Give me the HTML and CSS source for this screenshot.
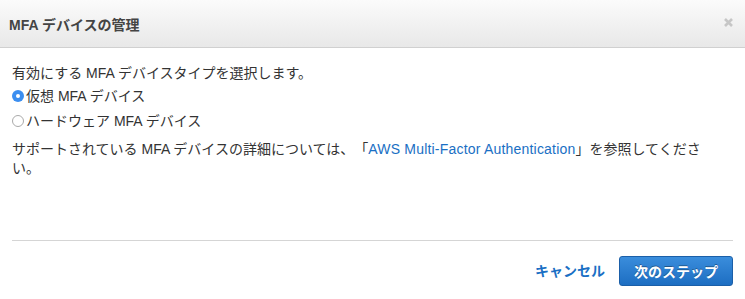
FILE: index.html
```html
<!DOCTYPE html>
<html lang="ja">
<head>
<meta charset="utf-8">
<link rel="stylesheet" href="styles.css">
</head>
<body>
<div class="modal">
  <div class="modal-header">
    <h1 class="title">MFA デバイスの管理</h1>
    <svg class="close" width="9" height="9" viewBox="0 0 9 9"><path d="M1 1L8 8M8 1L1 8" stroke="#c6c6c6" stroke-width="2.6" stroke-linecap="butt"/></svg>
  </div>
  <div class="modal-body">
    <p class="intro">有効にする MFA デバイスタイプを選択します。</p>
    <label class="radio-row"><span class="radio checked"></span>仮想 MFA デバイス</label>
    <label class="radio-row"><span class="radio"></span>ハードウェア MFA デバイス</label>
    <p class="info">サポートされている MFA デバイスの詳細については、「<a class="link" href="#">AWS Multi-Factor Authentication</a>」を参照してください。</p>
  </div>
  <div class="modal-footer">
    <a class="cancel" href="#">キャンセル</a>
    <button class="primary">次のステップ</button>
  </div>
</div>
</body>
</html>
```
FILE: styles.css
```css
html, body {
  margin: 0;
  padding: 0;
  background: #fff;
}
body {
  font-family: "Liberation Sans", "Noto Sans CJK JP", sans-serif;
  color: #333;
  font-size: 14px;
  text-spacing-trim: space-all;
}
.modal {
  width: 745px;
  height: 299px;
  display: flex;
  flex-direction: column;
}
.modal-header {
  height: 48px;
  box-sizing: border-box;
  border-bottom: 1px solid #d0d0d0;
  background: linear-gradient(#fbfbfb, #e8e8e8);
  display: flex;
  align-items: center;
  justify-content: space-between;
  padding: 0 12px 0 9px;
}
.title {
  margin: 0;
  font-size: 14px;
  font-weight: bold;
  color: #444;
}
.close {
  display: block;
  margin-top: -2px;
}
.modal-body {
  padding: 15px 12px 0 12px;
  flex: 1;
}
.intro {
  margin: 0;
  line-height: 20px;
}
.radio-row {
  display: flex;
  align-items: center;
  height: 25px;
  line-height: 20px;
}
.radio {
  width: 12px;
  height: 12px;
  box-sizing: border-box;
  border-radius: 50%;
  border: 1px solid #aaa;
  background: #fff;
  margin-right: 2px;
  position: relative;
}
.radio.checked {
  border: none;
  background: #3b8ef0;
}
.radio.checked::after {
  content: "";
  position: absolute;
  left: 4px;
  top: 4px;
  width: 4px;
  height: 4px;
  border-radius: 50%;
  background: #fff;
}
.info {
  margin: 7px 0 0 0;
  line-height: 19px;
  width: 706px;
}
.link {
  color: #1a6fc4;
  text-decoration: none;
  letter-spacing: 0.2px;
}
.modal-footer {
  margin: 0 12px;
  border-top: 1px solid #d5d5d5;
  height: 58px;
  display: flex;
  align-items: center;
  justify-content: flex-end;
  gap: 14px;
}
.cancel {
  color: #1a6fc4;
  font-weight: bold;
  text-decoration: none;
  font-size: 14px;
}
.primary {
  font-family: inherit;
  font-size: 14px;
  font-weight: bold;
  color: #fff;
  width: 114px;
  height: 30px;
  border: 1px solid #1b5fa8;
  border-radius: 3px;
  background: linear-gradient(#3a8ddc, #1d6ec2);
  text-shadow: 0 -1px 0 rgba(0,0,0,0.35);
  margin-top: 2px;
}
```
